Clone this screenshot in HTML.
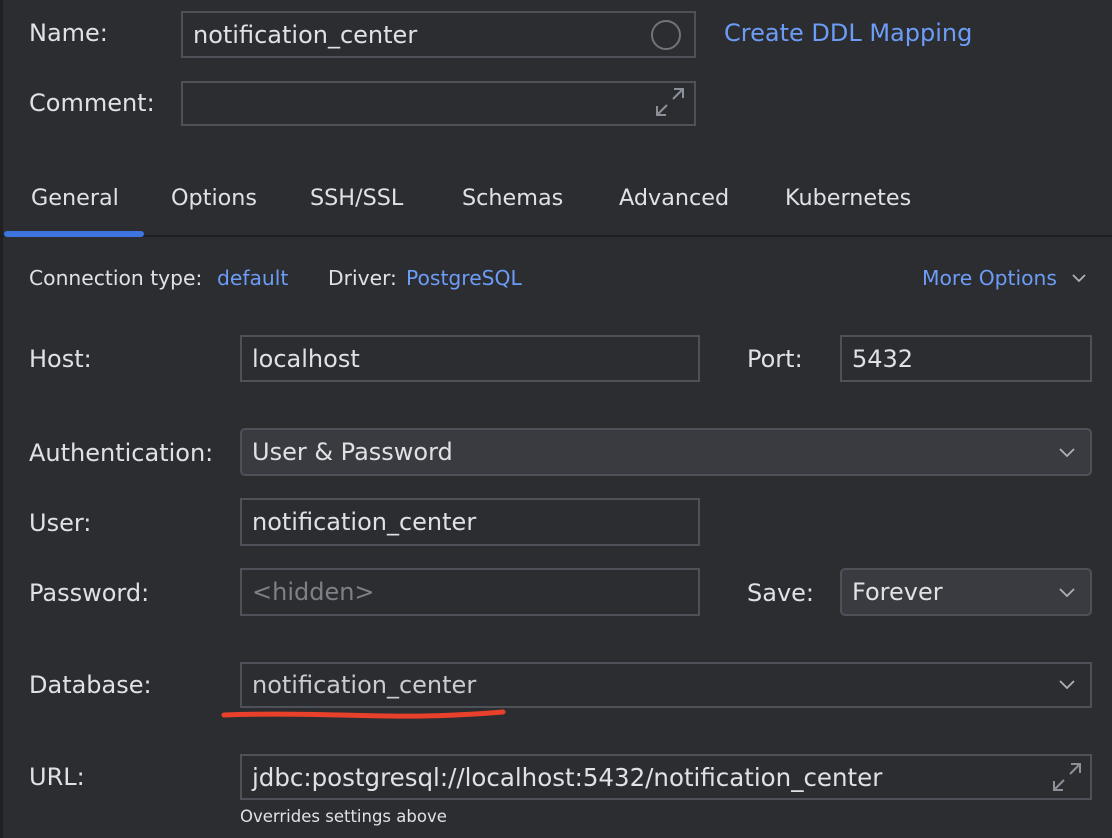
<!DOCTYPE html>
<html><head><meta charset="utf-8"><style>
*{margin:0;padding:0;box-sizing:border-box}
body{width:1112px;height:838px;background:#2b2d30;position:relative;overflow:hidden;font-family:"DejaVu Sans",sans-serif;color:#dfe1e5}
.a{position:absolute;white-space:nowrap}
.l{font-size:24px;line-height:28px}
.f{position:absolute;border:2px solid #4e5157;background:#2b2d30;font-size:24px;padding-left:10px;display:flex;align-items:center}
.c{background:#393b40;border-radius:5px}
.t{font-size:22.3px;line-height:28px;top:184px}
.s{font-size:20.3px;line-height:26px;top:265px}
.lk{color:#6d9cf7}
svg.ch{position:absolute}
</style></head><body>
<div class="a" style="left:0;top:0;width:3px;height:838px;background:#1f2023"></div>
<div class="a l" style="left:29px;top:19px">Name:</div>
<div class="f" style="left:181px;top:11px;width:515px;height:47px;padding-left:10px">notification_center</div>
<div class="a" style="left:651px;top:20px;width:30px;height:30px;border:2px solid #6f737a;border-radius:50%"></div>
<div class="a lk" style="left:724px;top:19px;font-size:24px;line-height:28px">Create DDL Mapping</div>
<div class="a l" style="left:29px;top:89px">Comment:</div>
<div class="f" style="left:181px;top:81px;width:515px;height:45px"></div>
<svg class="ch" style="left:654px;top:86px" width="32" height="32" viewBox="0 0 32 32" fill="none" stroke="#8c9098" stroke-width="2"><path d="M20 3h9v9M29 3l-10 10M12 29H3v-9M3 29l10-10"/></svg>

<div class="a t" style="left:31px">General</div>
<div class="a t" style="left:171px">Options</div>
<div class="a t" style="left:310px">SSH/SSL</div>
<div class="a t" style="left:462px">Schemas</div>
<div class="a t" style="left:619px">Advanced</div>
<div class="a t" style="left:785px">Kubernetes</div>
<div class="a" style="left:0;top:235px;width:1112px;height:2px;background:#1e1f22"></div>
<div class="a" style="left:4px;top:231px;width:140px;height:6px;background:#3d74e0;border-radius:3px"></div>

<div class="a s" style="left:29px">Connection type:</div>
<div class="a s lk" style="left:217px">default</div>
<div class="a s" style="left:328px">Driver:</div>
<div class="a s lk" style="left:406px">PostgreSQL</div>
<div class="a s lk" style="left:922px">More Options</div>
<svg class="ch" style="left:1071px;top:272px" width="16" height="12" viewBox="0 0 16 12" fill="none" stroke="#aeb2b8" stroke-width="1.8"><path d="M2 3l6 6 6-6"/></svg>

<div class="a l" style="left:29px;top:345px">Host:</div>
<div class="f" style="left:240px;top:335px;width:460px;height:47px">localhost</div>
<div class="a l" style="left:747px;top:345px">Port:</div>
<div class="f" style="left:840px;top:335px;width:252px;height:47px">5432</div>

<div class="a l" style="left:29px;top:439px">Authentication:</div>
<div class="f c" style="left:240px;top:428px;width:852px;height:48px">User &amp; Password</div>
<svg class="ch" style="left:1058px;top:446px" width="18" height="12" viewBox="0 0 18 12" fill="none" stroke="#aeb2b8" stroke-width="1.8"><path d="M2 3l7 7 7-7"/></svg>

<div class="a l" style="left:29px;top:509px">User:</div>
<div class="f" style="left:240px;top:498px;width:460px;height:48px">notification_center</div>

<div class="a l" style="left:29px;top:579px">Password:</div>
<div class="f" style="left:240px;top:568px;width:460px;height:48px;color:#7d8087">&lt;hidden&gt;</div>
<div class="a l" style="left:747px;top:579px">Save:</div>
<div class="f c" style="left:840px;top:568px;width:252px;height:48px">Forever</div>
<svg class="ch" style="left:1058px;top:586px" width="18" height="12" viewBox="0 0 18 12" fill="none" stroke="#aeb2b8" stroke-width="1.8"><path d="M2 3l7 7 7-7"/></svg>

<div class="a l" style="left:29px;top:671px">Database:</div>
<div class="f" style="left:240px;top:662px;width:852px;height:46px;color:#c9ccd1">notification_center</div>
<svg class="ch" style="left:1058px;top:678px" width="18" height="12" viewBox="0 0 18 12" fill="none" stroke="#aeb2b8" stroke-width="1.8"><path d="M2 3l7 7 7-7"/></svg>
<svg class="ch" style="left:218px;top:705px" width="292" height="16" viewBox="0 0 292 16"><path d="M6 10 C60 8 120 10 170 11 C220 12 260 9 285 7" stroke="#e8402a" stroke-width="5" fill="none" stroke-linecap="round"/></svg>

<div class="a l" style="left:29px;top:763px">URL:</div>
<div class="f" style="left:240px;top:754px;width:852px;height:46px;font-size:24.5px">jdbc:postgresql://localhost:5432/notification_center</div>
<svg class="ch" style="left:1051px;top:761px" width="32" height="32" viewBox="0 0 32 32" fill="none" stroke="#8c9098" stroke-width="2"><path d="M20 3h9v9M29 3l-10 10M12 29H3v-9M3 29l10-10"/></svg>
<div class="a" style="left:240px;top:807px;font-size:16.5px;line-height:20px">Overrides settings above</div>
</body></html>
